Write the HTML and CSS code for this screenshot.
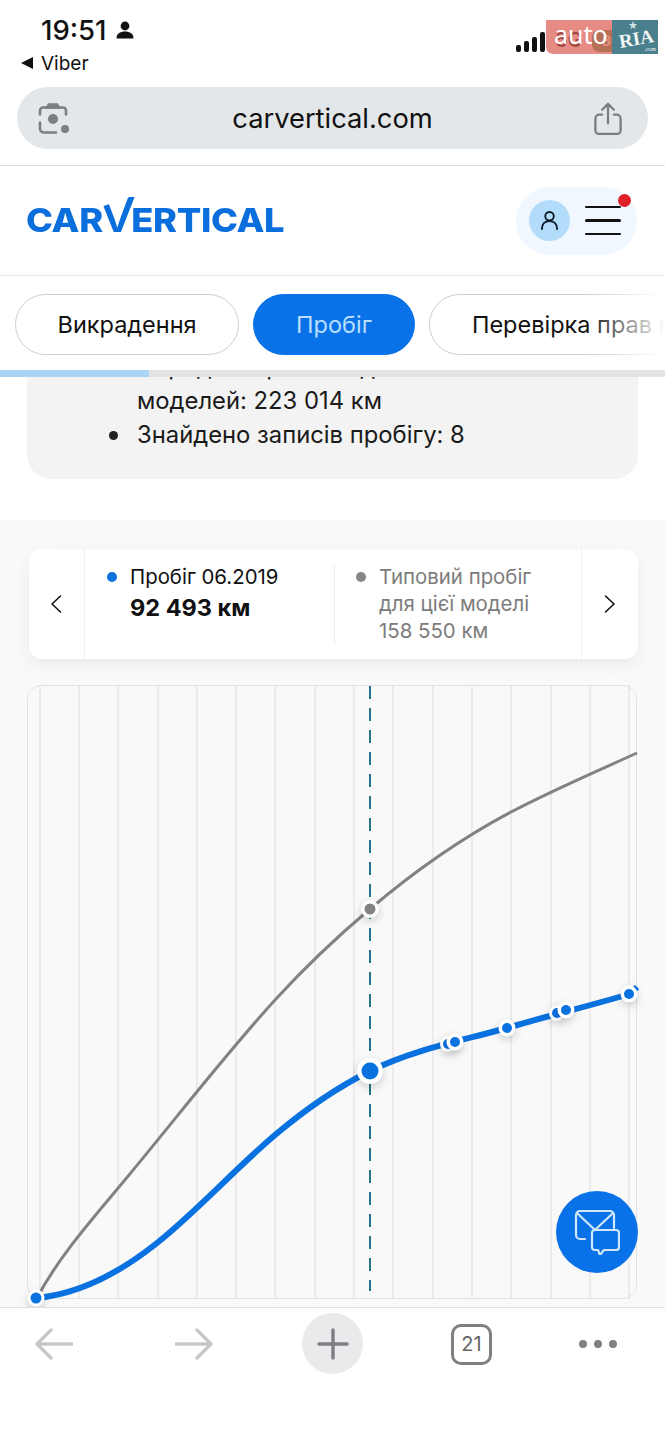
FILE: index.html
```html
<!DOCTYPE html>
<html lang="uk">
<head>
    <meta charset="UTF-8">
    <meta name="viewport" content="width=device-width, initial-scale=1.0">
    <title>carVertical - Пробіг</title>
    <link rel="stylesheet" href="styles.css">
</head>
<body>
    <div class="phone">
        <div class="status-bar">
            <div class="status-left">
                <div class="clock-row">
                    <span class="clock">19:51</span>
                    <svg class="person" viewBox="0 0 18 18"><circle cx="9" cy="5" r="4.4" fill="#111"/><path d="M0.5 17.5c0-5 3.500-7 8.500-7s8.500 2 8.500 7z" fill="#111"/></svg>
                </div>
                <div class="back-app"><span class="back-tri"></span>Viber</div>
            </div>
            <div class="status-right">
                <div class="signal"><i></i><i></i><i></i><i></i></div>
                <span class="net">5G</span>
                <span class="battery">80</span>
            </div>
        </div>

        <div class="watermark">
            <div class="wm-auto">auto</div>
            <div class="wm-ria"><span class="wm-star">★</span><span class="wm-name">RIA</span><small>.com</small></div>
        </div>

        <div class="address-wrap">
            <div class="address-bar">
                <svg class="addr-icon" viewBox="0 0 32 32" fill="none" stroke="#7b7e82" stroke-width="2.600" stroke-linecap="round">
                    <path d="M2 12V8a3 3 0 0 1 3-3h20a3 3 0 0 1 3 3v4"/>
                    <path d="M9 5l2-3h8l2 3z" fill="#7b7e82"/>
                    <path d="M2 20v6a4 4 0 0 0 4 4h12"/>
                    <circle cx="15" cy="16.500" r="5" fill="#7b7e82" stroke="none"/>
                    <circle cx="27" cy="26.500" r="4" fill="#7b7e82" stroke="none"/>
                </svg>
                <span class="addr-text">carvertical.com</span>
                <svg class="addr-icon" viewBox="0 0 28 34" fill="none" stroke="#7b7e82" stroke-width="2.400" stroke-linecap="round" stroke-linejoin="round">
                    <path d="M8 13H5a4 4 0 0 0-4 4v12a4 4 0 0 0 4 4h18a4 4 0 0 0 4-4V17a4 4 0 0 0-4-4h-3"/>
                    <path d="M14 22V2M8 8l6-6 6 6"/>
                </svg>
            </div>
        </div>

        <header class="site-header">
            <div class="logo"><span>CAR</span><span class="logo-v">V</span><span>ERTICAL</span></div>
            <div class="user-pill">
                <div class="avatar">
                    <svg viewBox="0 0 20 22" fill="none" stroke="#0d1b2a" stroke-width="2" stroke-linecap="round"><circle cx="10" cy="6.500" r="4.500"/><path d="M2 20c0-5 3-8.500 8-8.500s8 3.500 8 8.500"/></svg>
                </div>
                <div class="burger"><i></i><i></i><i></i></div>
                <span class="red-dot"></span>
            </div>
        </header>

        <nav class="tabs">
            <a class="tab tab-first">Викрадення</a>
            <a class="tab active">Пробіг</a>
            <a class="tab">Перевірка прав власності</a>
        </nav>
        <div class="progress"><div class="progress-fill"></div></div>

        <div class="info-box">
            <ul>
                <li>Середній пробіг подібних моделей: 223 014 км</li>
                <li>Знайдено записів пробігу: 8</li>
            </ul>
        </div>

        <section class="mileage">
            <div class="legend-card">
                <div class="legend-arrow">
                    <svg viewBox="0 0 12 20" fill="none" stroke="#111" stroke-width="1.600" stroke-linecap="round" stroke-linejoin="round"><path d="M10.500 2L2 10l8.500 8"/></svg>
                </div>
                <div class="legend-cell">
                    <div class="legend-line"><span class="dot dot-blue"></span>Пробіг 06.2019</div>
                    <div class="legend-value">92 493 км</div>
                </div>
                <div class="legend-cell legend-muted">
                    <div class="legend-line"><span class="dot dot-grey"></span>Типовий пробіг</div>
                    <div class="legend-sub">для цієї моделі</div>
                    <div class="legend-sub">158 550 км</div>
                </div>
                <div class="legend-arrow arrow-right">
                    <svg viewBox="0 0 12 20" fill="none" stroke="#111" stroke-width="1.600" stroke-linecap="round" stroke-linejoin="round"><path d="M1.500 2L10 10l-8.500 8"/></svg>
                </div>
            </div>

            <div class="chart">
                <svg class="chart-svg" viewBox="27 685 610 614">
                    <g stroke="#e6e6e6" stroke-width="1.500">
                        <path d="M40 685V1299M79 685V1299M118 685V1299M158 685V1299M197 685V1299M236 685V1299M275 685V1299M315 685V1299M354 685V1299M393 685V1299M433 685V1299M472 685V1299M511 685V1299M551 685V1299M590 685V1299M629 685V1299"/>
                    </g>
                    <path d="M370 686V1291" stroke="#0f6480" stroke-width="1.800" stroke-dasharray="13 9"/>
                    <path d="M37 1298C58 1258 90 1222 119 1187C171 1125 223 1057 275 1000C307 965 338 936 370 909C417 869 464 837 511 812C553 790 595 772 637 753" fill="none" stroke="#828282" stroke-width="3"/>
                    <path d="M37 1298C77 1294 117 1275 157 1243C196 1212 236 1168 275 1135C307 1108 338 1087 370 1071C415 1049 461 1041 507 1028C547 1016 590 1006 629 994C632 992.500 635 989 637 987" fill="none" stroke="#0a72e0" stroke-width="6"/>
                    <g class="chart-dots">
                        <circle cx="370" cy="909" r="9" fill="#fff"/><circle cx="370" cy="909" r="5.500" fill="#828282"/>
                        <circle cx="370" cy="1071" r="13" fill="#fff"/><circle cx="370" cy="1071" r="8.500" fill="#0a72e0"/>
                        <circle cx="448" cy="1044" r="8" fill="#fff"/><circle cx="448" cy="1044" r="5" fill="#0a72e0"/>
                        <circle cx="455" cy="1042" r="8.500" fill="#fff"/><circle cx="455" cy="1042" r="5" fill="#0a72e0"/>
                        <circle cx="507" cy="1028" r="8.500" fill="#fff"/><circle cx="507" cy="1028" r="5" fill="#0a72e0"/>
                        <circle cx="557" cy="1013" r="8" fill="#fff"/><circle cx="557" cy="1013" r="5" fill="#0a72e0"/>
                        <circle cx="566" cy="1010" r="8.500" fill="#fff"/><circle cx="566" cy="1010" r="5" fill="#0a72e0"/>
                        <circle cx="629" cy="994" r="8.500" fill="#fff"/><circle cx="629" cy="994" r="5" fill="#0a72e0"/>
                        <circle cx="36" cy="1298" r="8.500" fill="#fff"/><circle cx="36" cy="1298" r="5.500" fill="#0a72e0"/>
                    </g>
                </svg>
            </div>
        </section>

        <button class="fab">
            <svg viewBox="0 0 46 46" fill="none" stroke="#cfe6fb" stroke-width="2.200" stroke-linecap="round" stroke-linejoin="round">
                <path d="M11 30H6a4 4 0 0 1-4-4V6a4 4 0 0 1 4-4h30a4 4 0 0 1 4 4v13"/>
                <path d="M3 4l18 17L39 4"/>
                <path d="M21 21h21a3 3 0 0 1 3 3v14a3 3 0 0 1-3 3H30l-4 5-2-5h-3a3 3 0 0 1-3-3V24a3 3 0 0 1 3-3z"/>
            </svg>
        </button>

        <footer class="toolbar">
            <svg class="tool-arrow" viewBox="0 0 38 32" fill="none" stroke="#c8c8c8" stroke-width="3.400" stroke-linecap="round" stroke-linejoin="round"><path d="M37 16H2M16 2L2 16l14 14"/></svg>
            <svg class="tool-arrow" viewBox="0 0 38 32" fill="none" stroke="#c8c8c8" stroke-width="3.400" stroke-linecap="round" stroke-linejoin="round"><path d="M1 16h35M22 2l14 14-14 14"/></svg>
            <div class="plus-btn">
                <svg viewBox="0 0 32 32" fill="none" stroke="#7d7f82" stroke-width="3.400" stroke-linecap="round"><path d="M16 2v28M2 16h28"/></svg>
            </div>
            <div class="tab-count">21</div>
            <div class="more"><i></i><i></i><i></i></div>
        </footer>
    </div>
</body>
</html>
```

FILE: styles.css
```css
* {
    margin: 0;
    padding: 0;
    box-sizing: border-box;
}

body {
    font-family: 'Inter', 'Noto Sans', sans-serif;
    background: #fff;
    color: #111;
}

.phone {
    width: 665px;
    height: 1440px;
    position: relative;
    overflow: hidden;
    background: #fff;
}

/* status bar */
.status-bar {
    height: 87px;
    display: flex;
    justify-content: space-between;
    padding: 14px 0 0 21px;
}

.clock-row {
    display: flex;
    align-items: center;
    gap: 9px;
    padding-left: 20px;
    height: 32px;
}

.clock {
    font-size: 27.500px;
    font-weight: 500;
    color: #111;
}

.person {
    width: 18px;
    height: 18px;
}

.back-app {
    display: flex;
    align-items: center;
    gap: 8px;
    font-size: 19px;
    margin-top: 5px;
    height: 24px;
}

.back-tri {
    width: 0;
    height: 0;
    border-top: 6px solid transparent;
    border-bottom: 6px solid transparent;
    border-right: 12px solid #111;
}

.status-right {
    display: flex;
    align-items: flex-end;
    height: 38px;
    gap: 10px;
    padding-right: 35px;
}

.signal {
    display: flex;
    align-items: flex-end;
    gap: 3px;
    height: 22px;
}

.signal i {
    display: block;
    width: 5px;
    border-radius: 2px;
    background: #111;
}

.signal i:nth-child(1) { height: 7px; }
.signal i:nth-child(2) { height: 11px; }
.signal i:nth-child(3) { height: 15px; }
.signal i:nth-child(4) { height: 20px; }

.net {
    width: 28px;
    font-size: 20px;
    font-weight: 600;
    line-height: 24px;
}

.battery {
    font-size: 14px;
    font-weight: 700;
    line-height: 22px;
    width: 38px;
    margin-left: -1px;
    border-radius: 7px;
    background: #4b9a5a;
    color: #fff;
    text-align: center;
}

.watermark {
    position: absolute;
    top: 20px;
    left: 546px;
    display: flex;
    height: 34px;
}

.wm-auto {
    width: 66px;
    background: rgba(222, 96, 84, 0.72);
    border-bottom-left-radius: 7px;
    color: #fff;
    font-family: 'Noto Sans', sans-serif;
    font-size: 25px;
    line-height: 28px;
    padding-left: 8px;
}

.wm-ria {
    width: 46px;
    background: #4a7f8d;
    color: #f2f5f5;
    font-family: 'Liberation Serif', serif;
    font-weight: 700;
    position: relative;
}

.wm-name {
    position: absolute;
    left: 7px;
    top: 9px;
    font-size: 19px;
    line-height: 20px;
    transform: rotate(-10deg);
}

.wm-star {
    position: absolute;
    left: 16px;
    top: -1px;
    font-family: 'DejaVu Sans', sans-serif;
    font-size: 11px;
    line-height: 14px;
    font-weight: 400;
    color: #d5e2e5;
}

.wm-ria small {
    position: absolute;
    right: 2px;
    bottom: 1px;
    font-size: 6px;
    line-height: 8px;
    font-weight: 400;
}

/* address bar */
.address-wrap {
    height: 79px;
    padding: 0 17px;
    border-bottom: 1.500px solid #dedede;
}

.address-bar {
    height: 62px;
    width: 631px;
    border-radius: 31px;
    background: #e4e7ea;
    display: flex;
    align-items: center;
    justify-content: space-between;
    padding: 0 24px 0 21px;
}

.addr-icon {
    width: 32px;
    height: 33px;
}

.addr-text {
    font-size: 27.300px;
    color: #111;
    margin-left: 3px;
}

/* site header */
.site-header {
    height: 110px;
    display: flex;
    align-items: center;
    justify-content: space-between;
    padding: 0 28px 0 26px;
    border-bottom: 1.500px solid #e6e6e6;
}

.logo {
    display: flex;
    align-items: baseline;
    color: #0a6fdc;
    font-weight: 800;
    font-size: 33px;
    letter-spacing: -0.3px;
    line-height: 40px;
    padding-bottom: 6px;
    transform: scaleX(1.1);
    transform-origin: left center;
}

.logo-v {
    font-size: 48px;
    font-weight: 500;
    line-height: 40px;
    margin: 0 -4px 0 -4px;
    clip-path: polygon(0 32%, 100% 0, 100% 100%, 0 100%);
}

.user-pill {
    width: 121px;
    height: 68px;
    border-radius: 34px;
    background: #f0f7fe;
    display: flex;
    align-items: center;
    gap: 15px;
    padding-left: 13px;
    position: relative;
}

.avatar {
    width: 41px;
    height: 41px;
    border-radius: 50%;
    background: #b3dcfa;
    display: flex;
    align-items: center;
    justify-content: center;
}

.avatar svg {
    width: 19px;
    height: 21px;
}

.burger {
    width: 36px;
    display: flex;
    flex-direction: column;
    gap: 11px;
}

.burger i {
    display: block;
    height: 2.500px;
    background: #111;
    border-radius: 2px;
}

.red-dot {
    position: absolute;
    top: 7px;
    right: 6px;
    width: 13px;
    height: 13px;
    border-radius: 50%;
    background: #e0202a;
}

/* tabs */
.tabs {
    height: 94px;
    display: flex;
    gap: 14px;
    align-items: flex-start;
    padding: 18px 0 0 15px;
    overflow: hidden;
    background: #fff;
    position: relative;
    z-index: 2;
}

.tabs::after {
    content: '';
    position: absolute;
    top: 0;
    right: 0;
    width: 80px;
    height: 100%;
    background: linear-gradient(90deg, rgba(255, 255, 255, 0), #fff);
}

.tab {
    flex: none;
    height: 61px;
    line-height: 59px;
    padding: 0 42px;
    font-size: 23.500px;
    border: 1.500px solid #cfcfcf;
    border-radius: 31px;
    color: #111;
    background: #fff;
}

.tab-first {
    padding: 0 41.500px;
}

.tab.active {
    background: #0a72e8;
    border-color: #0a72e8;
    color: #b9dfff;
}

.progress {
    height: 7px;
    background: #e3e3e3;
    position: relative;
    z-index: 2;
}

.progress-fill {
    width: 149px;
    height: 100%;
    background: #a9d5f5;
}

/* info box */
.info-box {
    margin: -60px 27px 0;
    height: 162px;
    padding: 0 0 0 110px;
    background: #f3f3f3;
    border-radius: 0 0 24px 24px;
    display: flex;
    align-items: flex-end;
}

.info-box ul {
    list-style: none;
    font-size: 23.800px;
    line-height: 34px;
    padding-bottom: 27px;
    width: 400px;
    color: #1a1a1a;
}

.info-box li {
    position: relative;
}

.info-box li::before {
    content: '';
    position: absolute;
    left: -28px;
    top: 13px;
    width: 9px;
    height: 9px;
    border-radius: 50%;
    background: #222;
}

/* mileage chart */
.mileage {
    margin-top: 41px;
    height: 787px;
    background: #f9f9f9;
    padding: 29px 28px 0 28px;
}

.legend-card {
    height: 110px;
    width: 609px;
    margin-left: 1px;
    background: #fff;
    border-radius: 13px;
    box-shadow: 0 6px 16px rgba(0, 0, 0, 0.06);
    display: grid;
    grid-template-columns: 56px 249px 247px 57px;
}

.legend-arrow {
    display: flex;
    align-items: center;
    justify-content: center;
    border-right: 1px solid #eee;
    padding-right: 2px;
}

.legend-arrow svg {
    width: 12px;
    height: 20px;
}

.arrow-right {
    border-right: none;
    border-left: 1px solid #eee;
    padding-right: 1px;
}

.legend-cell {
    padding: 14px 0 0 22px;
    position: relative;
    font-size: 20.400px;
    line-height: 27px;
}

.legend-cell + .legend-cell::before {
    content: '';
    position: absolute;
    left: 0;
    top: 16px;
    bottom: 14px;
    border-left: 1px solid #eee;
}

.legend-line {
    display: flex;
    align-items: center;
    gap: 13px;
}

.dot {
    width: 10px;
    height: 10px;
    border-radius: 50%;
}

.dot-blue { background: #0a72e0; }
.dot-grey { background: #868686; }

.legend-value {
    font-size: 23.500px;
    font-weight: 700;
    padding: 4px 0 0 23px;
}

.legend-muted {
    color: #7c7c7c;
}

.legend-sub {
    padding-left: 23px;
}

.chart {
    margin-top: 26px;
    width: 610px;
    margin-left: -1px;
    height: 614px;
    border: 1.500px solid #e2e2e2;
    border-radius: 14px;
    position: relative;
}

.chart-svg {
    position: absolute;
    top: -1.500px;
    left: -1.500px;
    width: 610px;
    height: 614px;
    overflow: visible;
}

.chart-dots circle[fill="#fff"] {
    filter: drop-shadow(0 3px 4px rgba(0, 0, 0, 0.18));
}

.fab {
    position: absolute;
    left: 556px;
    top: 1191px;
    width: 82px;
    height: 82px;
    border: none;
    border-radius: 50%;
    background: #0a72e8;
    display: flex;
    align-items: center;
    justify-content: center;
    z-index: 3;
}

.fab svg {
    width: 46px;
    height: 46px;
}

/* browser toolbar */
.toolbar {
    position: relative;
    z-index: 2;
    height: 133px;
    background: #fff;
    border-top: 1.500px solid #dedede;
    display: flex;
    align-items: flex-start;
    padding: 5px 0 0 35px;
}

.tool-arrow {
    width: 38px;
    height: 32px;
    margin-top: 15px;
    margin-right: 102px;
}

.plus-btn {
    width: 61px;
    height: 61px;
    border-radius: 50%;
    background: #e8eaec;
    display: flex;
    align-items: center;
    justify-content: center;
    margin-left: -13px;
}

.plus-btn svg {
    width: 32px;
    height: 32px;
}

.tab-count {
    width: 41px;
    height: 41px;
    margin: 11px 0 0 88px;
    border: 3px solid #808080;
    border-radius: 10px;
    color: #666;
    font-size: 20px;
    line-height: 35px;
    text-align: center;
}

.more {
    display: flex;
    gap: 7px;
    margin: 27px 0 0 87px;
}

.more i {
    display: block;
    width: 8px;
    height: 8px;
    border-radius: 50%;
    background: #808080;
}
```
